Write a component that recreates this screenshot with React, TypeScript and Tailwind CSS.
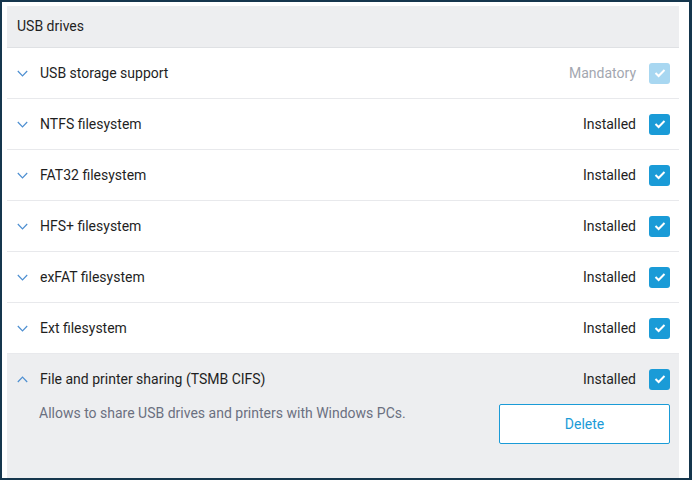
import React from 'react';

const font = { fontFamily: 'Roboto, "Liberation Sans", Arial, sans-serif' };

type Item = { name: string; status: string; mandatory?: boolean };

const items: Item[] = [
  { name: 'USB storage support', status: 'Mandatory', mandatory: true },
  { name: 'NTFS filesystem', status: 'Installed' },
  { name: 'FAT32 filesystem', status: 'Installed' },
  { name: 'HFS+ filesystem', status: 'Installed' },
  { name: 'exFAT filesystem', status: 'Installed' },
  { name: 'Ext filesystem', status: 'Installed' },
];

function Chevron({ up }: { up?: boolean }) {
  return (
    <svg width="11" height="7" viewBox="0 0 11 7" className="shrink-0">
      <path
        d={up ? 'M0.8 6 L5.5 1.2 L10.2 6' : 'M0.8 1 L5.5 5.8 L10.2 1'}
        fill="none"
        stroke="#4d8fd1"
        strokeWidth="1.2"
      />
    </svg>
  );
}

function Check({ light }: { light?: boolean }) {
  return (
    <span
      className={
        'flex h-[21px] w-[21px] items-center justify-center rounded-[3px] ' +
        (light ? 'bg-[#a8d7f1]' : 'bg-[#1a9bd7]')
      }
    >
      <svg width="12" height="10" viewBox="0 0 12 10">
        <path d="M1.5 5 L4.6 8 L10.5 2" fill="none" stroke="#fff" strokeWidth="2" />
      </svg>
    </span>
  );
}

function Row({ item }: { item: Item }) {
  return (
    <div className="flex h-[51px] items-center border-b border-[#e8e9ec] pl-[10px] pr-[9px]">
      <Chevron />
      <span className="ml-[12px] flex-1 text-[14px] text-[#1f1f1f]">{item.name}</span>
      <span className={'mr-[13px] text-[14px] ' + (item.mandatory ? 'text-[#a3a7b0]' : 'text-[#1f1f1f]')}>
        {item.status}
      </span>
      <Check light={item.mandatory} />
    </div>
  );
}

export default function App() {
  return (
    <div
      className="box-border flex h-[480px] w-[692px] flex-col border-2 border-r-[3px] border-[#15364d] bg-white pl-[5px] pr-[10px] pt-[4px]"
      style={font}
    >
      <div className="flex h-[42px] shrink-0 items-center border-b border-[#dfe1e4] bg-[#edeef0] pl-[10px] text-[14px] text-[#1f1f1f]">
        USB drives
      </div>
      {items.map((it) => (
        <Row key={it.name} item={it} />
      ))}
      <div className="flex-1 bg-[#edeef0]">
        <div className="flex h-[50px] items-center pl-[10px] pr-[9px]">
          <Chevron up />
          <span className="ml-[12px] flex-1 text-[14px] text-[#1f1f1f]">File and printer sharing (TSMB CIFS)</span>
          <span className="mr-[13px] text-[14px] text-[#1f1f1f]">Installed</span>
          <Check />
        </div>
        <div className="flex items-start justify-between pl-[32px] pr-[9px]">
          <span className="text-[14px] leading-[18px] text-[#6b7080]">
            Allows to share USB drives and printers with Windows PCs.
          </span>
          <button className="h-[40px] w-[171px] rounded-[2px] border border-[#1a9bd7] bg-white text-[14px] text-[#1a9bd7]">
            Delete
          </button>
        </div>
      </div>
    </div>
  );
}
